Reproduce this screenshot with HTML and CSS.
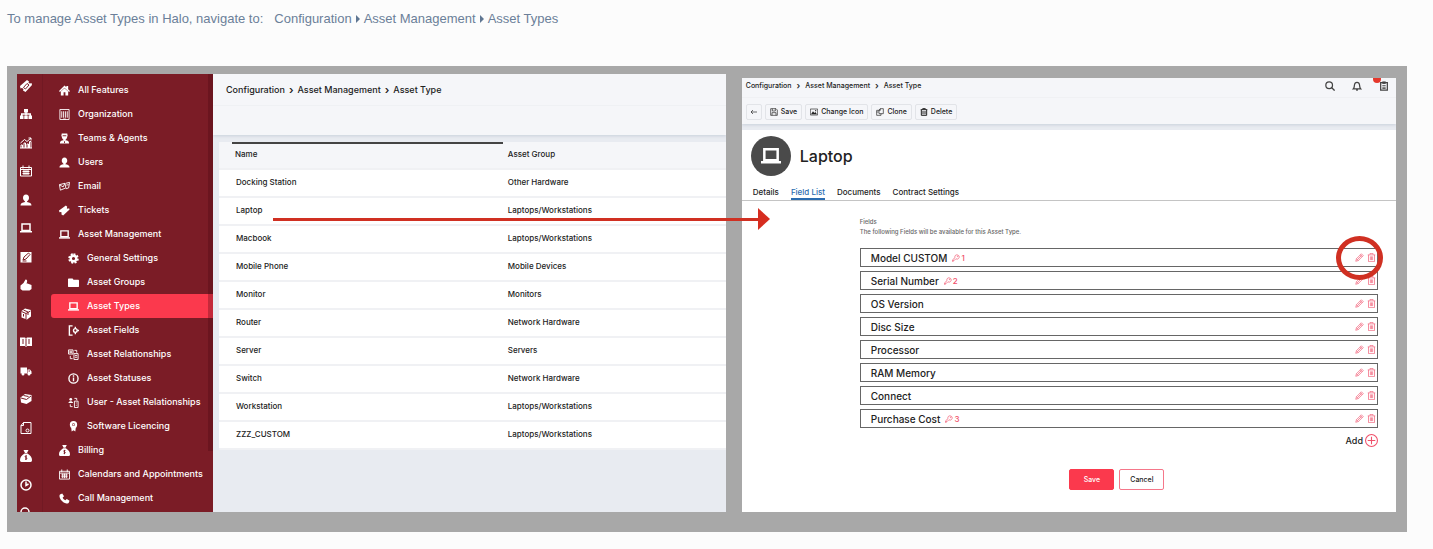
FILE: index.html
```html
<!doctype html>
<html lang="en">
<head>
	<meta charset="UTF-8">
	<title>Asset Types</title>
	<link rel="stylesheet" href="styles.css">
</head>
<body>
	<svg class="sprite" aria-hidden="true">
		<symbol id="ticket" viewBox="0 0 24 24"><path fill="currentColor" d="M15 1l3 3-1 3 2 1 3-1 1 3L9 23l-4-3 1-3-2-2-3 1-1-4z"/></symbol>
		<symbol id="tickets" viewBox="0 0 24 24"><path fill="currentColor" d="M14 0l4 3-1 3 3 1 3-1 1 4L11 24l-5-3 1-3-3-2-3 1-1-5z"/><path class="cut" d="M14 7l4 3-7 8-4-3z"/></symbol>
		<symbol id="sitemap" viewBox="0 0 24 24"><path fill="currentColor" d="M8 2h8v7H8zM0 15h7v7H0zM8.500 15h7v7h-7zM17 15h7v7h-7z"/><path class="line" d="M12 8v7M3.500 16v-4h17v4"/></symbol>
		<symbol id="chart" viewBox="0 0 24 24"><path class="thin" d="M2 22v-6h3v6M8 22V12h3v10M14 22v-8h3v8M19 22V9h3v13M0 22h24M1 12l8-7 5 4 8-7M17 2h5v5"/></symbol>
		<symbol id="calendar" viewBox="0 0 24 24"><path class="thin" d="M1 5h22v17H1zM1 9h22M6 1v6M18 1v6M5 13h14M5 17h14M8 10v10M12 10v10M16 10v10"/></symbol>
		<symbol id="user" viewBox="0 0 24 24"><path fill="currentColor" d="M12 1c4 0 6 3 6 7 0 3-2 5-4 7v1c5 1 9 2 9 7H1c0-5 4-6 9-7v-1c-2-2-4-4-4-7 0-4 2-7 6-7z"/></symbol>
		<symbol id="agent" viewBox="0 0 24 24"><path fill="currentColor" d="M6 1h12l1 6h-1c0 4-2 6-4 8v1c5 0 8 2 8 7H2c0-5 3-7 8-7v-1c-2-2-4-4-4-8H5z"/><path class="cut" d="M8 6h8M12 18v4"/></symbol>
		<symbol id="laptop" viewBox="0 0 24 24"><path class="line" d="M4 4h16v13H4z"/><path fill="currentColor" d="M0 18h24v3H0z"/></symbol>
		<symbol id="edit" viewBox="0 0 24 24"><path fill="currentColor" d="M1 2h22v21H1z"/><path class="cut" d="M6 18l2-6 9-8 3 3-8 9zM5 20h8"/></symbol>
		<symbol id="thumb" viewBox="0 0 24 24"><path fill="currentColor" d="M11 1c4 0 4 4 2 8h2l8 3v8l-4 3H5l-4-3v-7l6-5z"/></symbol>
		<symbol id="cubes" viewBox="0 0 24 24"><path fill="currentColor" d="M3 6l7-5 12 3v13l-8 6-11-4z"/><path class="cut" d="M3 7l9 4 9-5M12 11v11M7 4l9 4v6M7 12v5"/></symbol>
		<symbol id="book" viewBox="0 0 24 24"><path fill="currentColor" d="M0 3h10l2 2 2-2h10v17H14l-2 2-2-2H0z"/><path class="cut" d="M12 5v15M6 6v10M18 6v10"/></symbol>
		<symbol id="truck" viewBox="0 0 24 24"><path fill="currentColor" d="M1 5h13v12H1zM15 9h5l3 4v5h-8z"/><circle fill="currentColor" cx="6" cy="18" r="3"/><circle fill="currentColor" cx="18" cy="18" r="3"/><path class="cut" d="M17 12h3"/></symbol>
		<symbol id="box" viewBox="0 0 24 24"><path fill="currentColor" d="M1 9l9-7 13 2v12l-10 6-11-3z"/><path class="cut" d="M2 10l11 3 9-7M7 5l10 2"/></symbol>
		<symbol id="doc" viewBox="0 0 24 24"><path class="thin" d="M7 1h15v22H2V7zM7 1v6H2"/><circle class="thin" cx="15" cy="17" r="3"/></symbol>
		<symbol id="money" viewBox="0 0 24 24"><path fill="currentColor" d="M7 0h10l-3 6h-4zM9 7h6c6 4 9 8 9 13 0 2-1 4-3 4H3c-2 0-3-2-3-4 0-5 3-9 9-13z"/><path class="cut" d="M14 12c-4-1-5 2-2 3s2 4-2 3M12 11v9"/></symbol>
		<symbol id="clock" viewBox="0 0 24 24"><circle class="line" cx="12" cy="12" r="10"/><path class="line" d="M12 5v8l5-3"/></symbol>
		<symbol id="search" viewBox="0 0 24 24"><circle class="line" cx="10" cy="10" r="8"/><path class="line" d="M15 15l8 8"/></symbol>
		<symbol id="home" viewBox="0 0 24 24"><path fill="currentColor" d="M12 1l4 4V2h4v7l4 4-2 2-10-9-10 9-2-2zM4 14l8-7 8 7v9h-6v-7h-4v7H4z"/></symbol>
		<symbol id="building" viewBox="0 0 24 24"><path class="thin" d="M2 1h20v22H2zM6 5v14M10 5v14M14 5v14M18 5v14M9 22h6"/></symbol>
		<symbol id="mail" viewBox="0 0 24 24"><path class="thin" d="M1 8l12-3 2 10-12 5zM1 8l8 5 4-8M15 5l8-2-2 12-6 2M16 9l5-1"/></symbol>
		<symbol id="gear" viewBox="0 0 24 24"><path fill="none" stroke="currentColor" stroke-width="5" stroke-dasharray="4 3.070" d="M12 3a9 9 0 1 1 0 18a9 9 0 1 1 0-18"/><circle fill="none" stroke="currentColor" stroke-width="5" cx="12" cy="12" r="6"/></symbol>
		<symbol id="folder" viewBox="0 0 24 24"><path fill="currentColor" d="M0 5c0-1 1-2 2-2h8l2 3h10c1 0 2 1 2 2v12c0 1-1 2-2 2H2c-1 0-2-1-2-2z"/></symbol>
		<symbol id="fields" viewBox="0 0 24 24"><path class="line" d="M10 22H3V2h7"/><circle class="line" cx="16" cy="12" r="4"/><path class="line" d="M16 4v4M16 16v4M20 12h4"/></symbol>
		<symbol id="relation" viewBox="0 0 24 24"><path class="thin" d="M1 2h10v9H1zM3 5h6M3 8h6M13 10h9v13h-9zM15 14h5M15 18h5M14 3h5v5M10 21H5v-6"/></symbol>
		<symbol id="info" viewBox="0 0 24 24"><circle class="line" cx="12" cy="12" r="10"/><path class="line" d="M12 10v8M12 5v3"/></symbol>
		<symbol id="userrel" viewBox="0 0 24 24"><circle fill="currentColor" cx="6" cy="5" r="3"/><path fill="currentColor" d="M1 13c0-5 10-5 10 0z"/><path class="thin" d="M14 9h8v14h-8zM17 13h2M17 18h2M14 3h5v4M10 21H5v-5"/></symbol>
		<symbol id="medal" viewBox="0 0 24 24"><circle fill="none" stroke="currentColor" stroke-width="5" cx="12" cy="8" r="5.500"/><circle fill="currentColor" cx="12" cy="8" r="2"/><path fill="currentColor" d="M7 14h10l-1 9-4-3-4 3z"/></symbol>
		<symbol id="phone" viewBox="0 0 24 24"><path fill="currentColor" d="M2 3l5-2 4 6-3 3c1 3 3 5 6 6l3-3 6 4-2 5c-1 1-3 1-5 1C8 21 1 13 1 6z"/></symbol>
		<symbol id="back" viewBox="0 0 24 24"><path class="thin" d="M21 12H3M9 6l-6 6 6 6"/></symbol>
		<symbol id="save" viewBox="0 0 24 24"><path class="thin" d="M2 2h16l4 4v16H2zM7 2v7h9V2M6 22v-8h12v8"/></symbol>
		<symbol id="image" viewBox="0 0 24 24"><path class="thin" d="M1 3h22v18H1z"/><path fill="currentColor" d="M3 19l6-9 4 5 3-3 5 7z"/><circle fill="currentColor" cx="17" cy="8" r="2"/></symbol>
		<symbol id="clone" viewBox="0 0 24 24"><path class="thin" d="M9 17V6l4-4h9v15zM9 7H2v15h13v-5M13 2v5H9M2 12h6"/></symbol>
		<symbol id="trash" viewBox="0 0 24 24"><path class="line" d="M2 5h20M8 4V2h8v2M4 6v16h16V6M9 9v10M15 9v10"/></symbol>
		<symbol id="bin" viewBox="0 0 24 24"><path class="thin" d="M2 5h20M8 4V1h8v3M4 5v18h16V5M9 9v10M12 9v10M15 9v10"/></symbol>
		<symbol id="bell" viewBox="0 0 24 24"><path class="line" d="M3 19c3-3 2-5 3-10 1-8 11-8 12 0 1 5 0 7 3 10zM10 22h4"/></symbol>
		<symbol id="clipboard" viewBox="0 0 24 24"><path class="line" d="M4 4h16v18H4z"/><path class="thin" d="M8 11h8M8 15h8M8 18h8"/><path fill="currentColor" d="M8 1h8v6H8z"/></symbol>
		<symbol id="pencil" viewBox="0 0 24 24"><path class="thin" d="M2 22l2-7L17 2l5 5L9 20zM4 15l5 5M14 5l5 5M7 17L18 6"/></symbol>
		<symbol id="key" viewBox="0 0 24 24"><path class="thin" d="M9 11C7 5 12 1 17 3c5 1 6 7 3 10-2 3-6 3-8 1l-5 5H4v3H1v-4z"/><circle class="thin" cx="17" cy="7" r="1"/></symbol>
		<symbol id="plus" viewBox="0 0 24 24"><circle class="thin" cx="12" cy="12" r="11"/><path class="thin" d="M12 5v14M5 12h14"/></symbol>
	</svg>

	<p class="path">
		<span class="path__lead">To manage Asset Types in Halo, navigate to:</span>
		<span>Configuration</span><i class="caret"></i><span>Asset Management</span><i class="caret"></i><span>Asset Types</span>
	</p>

	<main class="board">
		<section class="screen screen--list">
			<aside class="sidebar">
				<ul class="rail">
					<li><svg><use href="#tickets"/></svg></li>
					<li><svg><use href="#sitemap"/></svg></li>
					<li><svg><use href="#chart"/></svg></li>
					<li><svg><use href="#calendar"/></svg></li>
					<li><svg><use href="#user"/></svg></li>
					<li><svg><use href="#laptop"/></svg></li>
					<li><svg><use href="#edit"/></svg></li>
					<li><svg><use href="#thumb"/></svg></li>
					<li><svg><use href="#cubes"/></svg></li>
					<li><svg><use href="#book"/></svg></li>
					<li><svg><use href="#truck"/></svg></li>
					<li><svg><use href="#box"/></svg></li>
					<li><svg><use href="#doc"/></svg></li>
					<li><svg><use href="#money"/></svg></li>
					<li><svg><use href="#clock"/></svg></li>
					<li><svg><use href="#search"/></svg></li>
				</ul>
				<nav class="menu">
					<a href="#"><svg><use href="#home"/></svg>All Features</a>
					<a href="#"><svg><use href="#building"/></svg>Organization</a>
					<a href="#"><svg><use href="#agent"/></svg>Teams &amp; Agents</a>
					<a href="#"><svg><use href="#user"/></svg>Users</a>
					<a href="#"><svg><use href="#mail"/></svg>Email</a>
					<a href="#"><svg><use href="#ticket"/></svg>Tickets</a>
					<a href="#"><svg><use href="#laptop"/></svg>Asset Management</a>
					<a href="#" class="sub"><svg><use href="#gear"/></svg>General Settings</a>
					<a href="#" class="sub"><svg><use href="#folder"/></svg>Asset Groups</a>
					<a href="#" class="sub active"><svg><use href="#laptop"/></svg>Asset Types</a>
					<a href="#" class="sub"><svg><use href="#fields"/></svg>Asset Fields</a>
					<a href="#" class="sub"><svg><use href="#relation"/></svg>Asset Relationships</a>
					<a href="#" class="sub"><svg><use href="#info"/></svg>Asset Statuses</a>
					<a href="#" class="sub"><svg><use href="#userrel"/></svg>User - Asset Relationships</a>
					<a href="#" class="sub"><svg><use href="#medal"/></svg>Software Licencing</a>
					<a href="#"><svg><use href="#money"/></svg>Billing</a>
					<a href="#"><svg><use href="#calendar"/></svg>Calendars and Appointments</a>
					<a href="#"><svg><use href="#phone"/></svg>Call Management</a>
				</nav>
				<span class="scrollbar"></span>
			</aside>
			<div class="list">
				<header class="list__head">
					<div class="crumbs"><a href="#">Configuration</a><b>&rsaquo;</b><a href="#">Asset Management</a><b>&rsaquo;</b><a href="#">Asset Type</a></div>
				</header>
				<table class="types">
					<thead>
						<tr><th class="sorted">Name</th><th>Asset Group</th></tr>
					</thead>
					<tbody>
						<tr><td>Docking Station</td><td>Other Hardware</td></tr>
						<tr><td>Laptop</td><td>Laptops/Workstations</td></tr>
						<tr><td>Macbook</td><td>Laptops/Workstations</td></tr>
						<tr><td>Mobile Phone</td><td>Mobile Devices</td></tr>
						<tr><td>Monitor</td><td>Monitors</td></tr>
						<tr><td>Router</td><td>Network Hardware</td></tr>
						<tr><td>Server</td><td>Servers</td></tr>
						<tr><td>Switch</td><td>Network Hardware</td></tr>
						<tr><td>Workstation</td><td>Laptops/Workstations</td></tr>
						<tr><td>ZZZ_CUSTOM</td><td>Laptops/Workstations</td></tr>
					</tbody>
				</table>
			</div>
		</section>

		<section class="screen screen--detail">
			<header class="detail__head">
				<div class="topbar">
					<div class="crumbs crumbs--small"><a href="#">Configuration</a><b>&rsaquo;</b><a href="#">Asset Management</a><b>&rsaquo;</b><a href="#">Asset Type</a></div>
					<div class="tools">
						<button type="button" aria-label="Search"><svg><use href="#search"/></svg></button>
						<button type="button" aria-label="Notifications"><svg><use href="#bell"/></svg></button>
						<button type="button" aria-label="Tasks"><svg><use href="#clipboard"/></svg><span class="badge"></span></button>
					</div>
				</div>
				<div class="toolbar">
					<button type="button" aria-label="Back"><svg><use href="#back"/></svg></button>
					<button type="button"><svg><use href="#save"/></svg>Save</button>
					<button type="button"><svg><use href="#image"/></svg>Change Icon</button>
					<button type="button"><svg><use href="#clone"/></svg>Clone</button>
					<button type="button"><svg><use href="#trash"/></svg>Delete</button>
				</div>
			</header>
			<div class="detail">
				<div class="title">
					<span class="avatar"><svg><use href="#laptop"/></svg></span>
					<h1>Laptop</h1>
				</div>
				<nav class="tabs">
					<a href="#">Details</a>
					<a href="#" class="active">Field List</a>
					<a href="#">Documents</a>
					<a href="#">Contract Settings</a>
				</nav>
				<div class="fields">
					<h2>Fields</h2>
					<p>The following Fields will be available for this Asset Type.</p>
					<ul>
						<li><span>Model CUSTOM</span><em><svg><use href="#key"/></svg>1</em><div class="actions"><button type="button" aria-label="Edit"><svg><use href="#pencil"/></svg></button><button type="button" aria-label="Delete"><svg><use href="#bin"/></svg></button><span class="ring"></span></div></li>
						<li><span>Serial Number</span><em><svg><use href="#key"/></svg>2</em><div class="actions"><button type="button" aria-label="Edit"><svg><use href="#pencil"/></svg></button><button type="button" aria-label="Delete"><svg><use href="#bin"/></svg></button></div></li>
						<li><span>OS Version</span><div class="actions"><button type="button" aria-label="Edit"><svg><use href="#pencil"/></svg></button><button type="button" aria-label="Delete"><svg><use href="#bin"/></svg></button></div></li>
						<li><span>Disc Size</span><div class="actions"><button type="button" aria-label="Edit"><svg><use href="#pencil"/></svg></button><button type="button" aria-label="Delete"><svg><use href="#bin"/></svg></button></div></li>
						<li><span>Processor</span><div class="actions"><button type="button" aria-label="Edit"><svg><use href="#pencil"/></svg></button><button type="button" aria-label="Delete"><svg><use href="#bin"/></svg></button></div></li>
						<li><span>RAM Memory</span><div class="actions"><button type="button" aria-label="Edit"><svg><use href="#pencil"/></svg></button><button type="button" aria-label="Delete"><svg><use href="#bin"/></svg></button></div></li>
						<li><span>Connect</span><div class="actions"><button type="button" aria-label="Edit"><svg><use href="#pencil"/></svg></button><button type="button" aria-label="Delete"><svg><use href="#bin"/></svg></button></div></li>
						<li><span>Purchase Cost</span><em><svg><use href="#key"/></svg>3</em><div class="actions"><button type="button" aria-label="Edit"><svg><use href="#pencil"/></svg></button><button type="button" aria-label="Delete"><svg><use href="#bin"/></svg></button></div></li>
					</ul>
					<button type="button" class="add">Add<svg><use href="#plus"/></svg></button>
					<div class="buttons">
						<button type="button" class="primary">Save</button>
						<button type="button">Cancel</button>
					</div>
				</div>
			</div>
		</section>
		<span class="arrow"></span>
	</main>
</body>
</html>
```

FILE: styles.css
```css
*,*:before,*:after{box-sizing:border-box;margin:0;padding:0}
body{background:#fcfcfc;color:#222;font-family:Inter,"Open Sans",sans-serif;font-size:8px;font-weight:500;line-height:12px}
a{color:inherit;text-decoration:none}
ul{list-style:none}
button{background:none;border:0;color:inherit;font:inherit;cursor:pointer}
svg{display:block;flex:none;width:11px;height:11px}
.sprite{position:absolute;width:0;height:0}
.line{fill:none;stroke:currentColor;stroke-width:3}
.thin{fill:none;stroke:currentColor;stroke-width:2}
.cut{fill:none;stroke:#7b1c26;stroke-width:2}

.path{display:flex;align-items:center;padding:9px 7px 0;color:#6b7f99;font-family:"Liberation Sans",Arial,sans-serif;font-size:13px;font-weight:400;line-height:20px}
.path__lead{margin-right:11px}
.caret{border-left:4px solid #5f7692;border-top:4px solid transparent;border-bottom:4px solid transparent;margin:0 4px}

.board{position:relative;display:grid;grid-template-columns:13fr 12fr;column-gap:16px;margin:37px 26px 16px 7px;padding:8px 11px 20px 10px;background:#a8a8a8}
.screen{overflow:hidden;min-width:0}
.screen--list{display:flex;background:#e8ebf1}
.screen--detail{display:flex;flex-direction:column;margin-top:4px;background:#e8ebf1}

/* sidebar */
.sidebar{position:relative;display:flex;flex:none;width:196px;background:#7b1c26;color:#fff}
.rail{width:26px;padding:6px 0 0 3px;border-right:1px solid #711923}
.rail li{height:28px}
.rail li:nth-child(even){height:29px}
.rail li:last-child{height:5px;overflow:hidden}
.rail svg{width:12px;height:12px}
.menu{flex:1;padding:4px 0 0 8px}
.menu a{display:flex;align-items:center;gap:8px;height:24px;padding-left:8px;font-size:9px;white-space:nowrap}
.menu .sub{padding-left:17px}
.menu .active{background:#fb394d;border-radius:3px 0 0 3px}
.scrollbar{position:absolute;top:0;right:0;width:5px;height:86%;background:rgba(70,5,15,.3)}

/* list of asset types */
.list{flex:1;min-width:0}
.list__head{height:61px;background:#f5f6f9;box-shadow:0 1px 3px #c9d0da}
.crumbs{display:flex;align-items:center;gap:4px;height:32px;padding-left:13px;border-bottom:1px solid #eff1f4;font-size:9px}
.crumbs b{font-size:11px;font-weight:600}
.types{width:calc(100% - 6px);margin:7px 0 0 6px;border-collapse:collapse;table-layout:fixed;background:#fff}
.types th,.types td{height:28px;padding:0 0 2px 17px;border-bottom:2px solid #f0f1f4;font-weight:500;text-align:left}
.types th{height:27px;padding-left:16px;background:#f5f6f9}
.types th:first-child{width:56%}
.types th:last-child,.types td:last-child{padding-left:5px}
.types .sorted{background:#f5f6f9 linear-gradient(#444,#444) 13px 0/100% 2px no-repeat}

/* asset type detail */
.detail__head{background:#f5f6f9;box-shadow:0 1px 3px #c9d0da}
.topbar{display:flex;justify-content:space-between;height:20px;border-bottom:1px solid #f0f1f4}
.crumbs--small{gap:5px;height:16px;padding-left:4px;border:0;font-size:7px}
.crumbs--small b{font-size:9px}
.tools{display:flex;align-items:flex-start;gap:17px;padding:3px 7px 0 0;color:#444}
.tools button{position:relative}
.tools svg{width:10px;height:10px}
.badge{position:absolute;top:-6px;right:8px;width:8px;height:8px;border-radius:50%;background:#e5382c}
.toolbar{display:flex;gap:3px;height:26px;padding:6px 4px}
.toolbar button{display:flex;align-items:center;gap:3px;height:16px;padding:0 3px;border:1px solid #e2e4e8;border-radius:2px;font-size:7px}
.toolbar button+button{padding:0 4px}
.toolbar svg{width:8px;height:8px}
.detail{flex:1;margin-top:6px;background:#fff}
.title{display:flex;align-items:center;gap:9px;padding:6px 9px 0}
.title h1{font-size:16px;font-weight:500;line-height:20px}
.avatar{display:grid;place-items:center;width:40px;height:40px;border-radius:50%;background:#4a4a4a;color:#fff}
.avatar svg{width:20px;height:20px}
.tabs{display:flex;gap:12px;padding:11px 11px 0;border-bottom:1px solid #c4c4c4;line-height:10px}
.tabs a{padding-bottom:1px;border-bottom:2px solid transparent}
.tabs .active{border-color:#2b6cb0;color:#2b6cb0}
.fields{padding:16px 18px 0 118px}
.fields h2,.fields p{color:#666;font-size:6px;font-weight:500;line-height:10px}
.fields ul{display:grid;gap:4px;margin-top:11px}
.fields li{display:flex;align-items:center;gap:5px;height:19px;padding:0 1px 0 10px;border:1px solid #666;font-size:10px}
.fields em{display:flex;align-items:center;gap:1px;color:#f0506a;font-size:8px;font-style:normal}
.fields em svg{width:8px;height:8px}
.actions{position:relative;display:flex;gap:3px;margin-left:auto;color:#f26a80}
.actions svg{width:9px;height:9px}
.ring{position:absolute;z-index:1;top:-17px;right:-7px;width:47px;height:44px;border:5px solid #d03022;border-radius:50%}
.add{display:flex;align-items:center;gap:2px;margin:6px 0 0 auto;font-size:9px}
.add svg{width:13px;height:13px;color:#f0506a}
.buttons{display:flex;justify-content:center;gap:5px;margin-top:22px;padding-right:4px}
.buttons button{width:45px;height:21px;border:1px solid #f5778a;border-radius:2px;font-size:7px}
.buttons .primary{background:#fb394d;border-color:#fb394d;color:#fff}

/* arrow from the Laptop row to the detail screen */
.arrow{position:absolute;top:142px;left:19%;right:calc(45% + 7px);height:22px;background:linear-gradient(#d03022,#d03022) 0 50%/calc(100% - 10px) 3px no-repeat}
.arrow:after{content:"";position:absolute;right:0;top:0;border-left:12px solid #d62d20;border-top:11px solid transparent;border-bottom:11px solid transparent}
```
